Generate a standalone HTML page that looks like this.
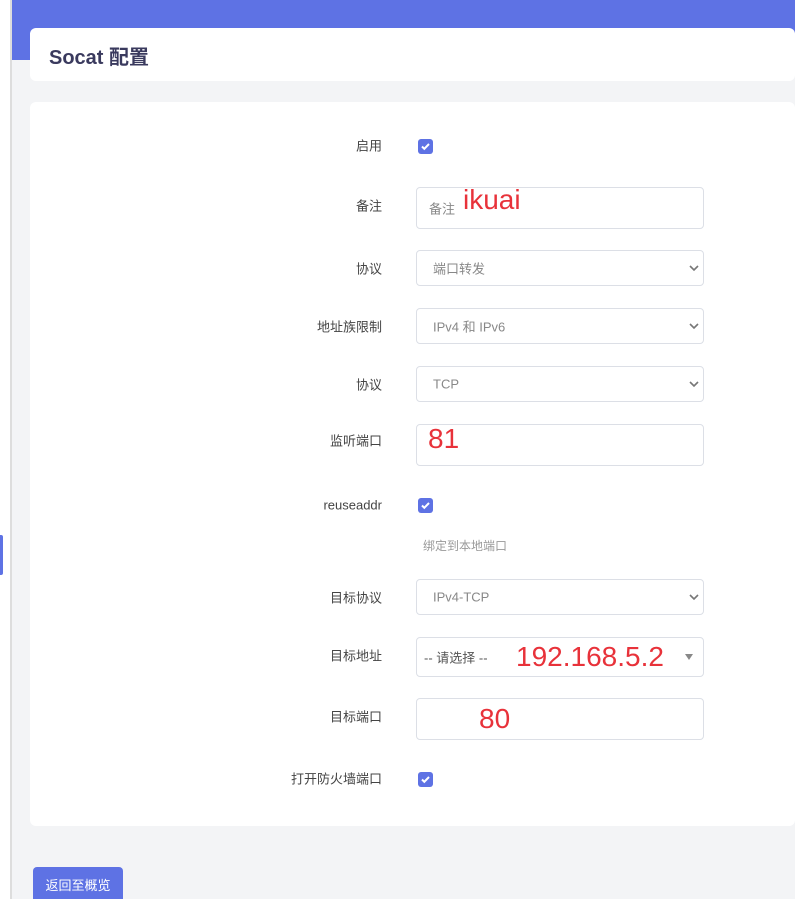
<!DOCTYPE html><html><head><meta charset="utf-8"><style>
html{overflow:hidden;height:899px}
body{margin:0;width:795px;height:899px;overflow:hidden;background:#f3f4f6;font-family:"Liberation Sans","Noto Sans CJK SC",sans-serif;position:relative}
.side{position:absolute;left:0;top:0;width:10px;height:899px;background:#fff;border-right:2px solid #ddd}
.tab{position:absolute;left:0;top:535px;width:3px;height:40px;background:#5e72e4;border-radius:0 2px 2px 0}
.band{position:absolute;left:12px;top:0;right:0;height:60px;background:#5e72e4}
.card{position:absolute;background:#fff;border-radius:6px;left:30px;right:0}
.title{top:28px;height:53px}
.title span{position:absolute;left:19px;top:13px;font-size:20px;font-weight:bold;color:#3a3a5e}
.form{top:102px;height:724px}
.lbl{position:absolute;right:413px;font-size:13px;color:#444;transform:translateY(-50%)}
.cb{position:absolute;left:418px;width:15px;height:15px;background:#5e72e4;border-radius:3px}
.cb svg{position:absolute;left:2px;top:2px}
.in{position:absolute;left:416px;width:288px;border:1px solid #dcdfe6;border-radius:4px;background:#fff;box-sizing:border-box;font-size:13px;color:#888}
.in span{position:absolute;top:50%;transform:translateY(-50%)}
.arr{position:absolute;right:4px;top:50%;transform:translateY(-50%)}
.red{color:#e8323a;font-size:28px}
.help{position:absolute;left:423px;top:537px;font-size:12px;color:#999}
.btn{position:absolute;left:33px;top:867px;width:90px;height:32px;background:#5e72e4;border-radius:4px 4px 0 0;color:#fff;font-size:13px;text-align:center;line-height:38px}
</style></head><body>
<div class="side"></div><div class="tab"></div><div class="band"></div>
<div class="card title"><span>Socat 配置</span></div>
<div class="card form"></div>
<div class="lbl" style="top:145px">启用</div>
<div class="cb" style="top:139px"><svg width="11" height="11" viewBox="0 0 11 11"><path d="M2 5.5l2.3 2.3L9 3" stroke="#fff" stroke-width="2" fill="none"/></svg></div>
<div class="lbl" style="top:205px">备注</div>
<div class="in" style="top:187px;height:42px"><span style="left:12px">备注</span><span class="red" style="left:46px;top:12px">ikuai</span></div>
<div class="lbl" style="top:268px">协议</div>
<div class="in" style="top:250px;height:36px"><span style="left:16px">端口转发</span><svg class="arr" width="10" height="8"><path d="M1 2l4 4 4-4" stroke="#777" stroke-width="1.6" fill="none"/></svg></div>
<div class="lbl" style="top:326px">地址族限制</div>
<div class="in" style="top:308px;height:36px"><span style="left:16px">IPv4 和 IPv6</span><svg class="arr" width="10" height="8"><path d="M1 2l4 4 4-4" stroke="#777" stroke-width="1.6" fill="none"/></svg></div>
<div class="lbl" style="top:384px">协议</div>
<div class="in" style="top:366px;height:36px"><span style="left:16px">TCP</span><svg class="arr" width="10" height="8"><path d="M1 2l4 4 4-4" stroke="#777" stroke-width="1.6" fill="none"/></svg></div>
<div class="lbl" style="top:440px">监听端口</div>
<div class="in" style="top:424px;height:42px"><span class="red" style="left:11px;top:14px">81</span></div>
<div class="lbl" style="top:505px">reuseaddr</div>
<div class="cb" style="top:498px"><svg width="11" height="11" viewBox="0 0 11 11"><path d="M2 5.5l2.3 2.3L9 3" stroke="#fff" stroke-width="2" fill="none"/></svg></div>
<div class="help">绑定到本地端口</div>
<div class="lbl" style="top:597px">目标协议</div>
<div class="in" style="top:579px;height:36px"><span style="left:16px">IPv4-TCP</span><svg class="arr" width="10" height="8"><path d="M1 2l4 4 4-4" stroke="#777" stroke-width="1.6" fill="none"/></svg></div>
<div class="lbl" style="top:655px">目标地址</div>
<div class="in" style="top:637px;height:40px"><span style="left:7px;color:#555">-- 请选择 --</span><span class="red" style="left:99px">192.168.5.2</span><svg class="arr" style="right:10px" width="8" height="6"><path d="M0 0h8L4 6z" fill="#888"/></svg></div>
<div class="lbl" style="top:716px">目标端口</div>
<div class="in" style="top:698px;height:42px"><span class="red" style="left:62px">80</span></div>
<div class="lbl" style="top:778px">打开防火墙端口</div>
<div class="cb" style="top:772px"><svg width="11" height="11" viewBox="0 0 11 11"><path d="M2 5.5l2.3 2.3L9 3" stroke="#fff" stroke-width="2" fill="none"/></svg></div>
<div class="btn">返回至概览</div>
</body></html>
